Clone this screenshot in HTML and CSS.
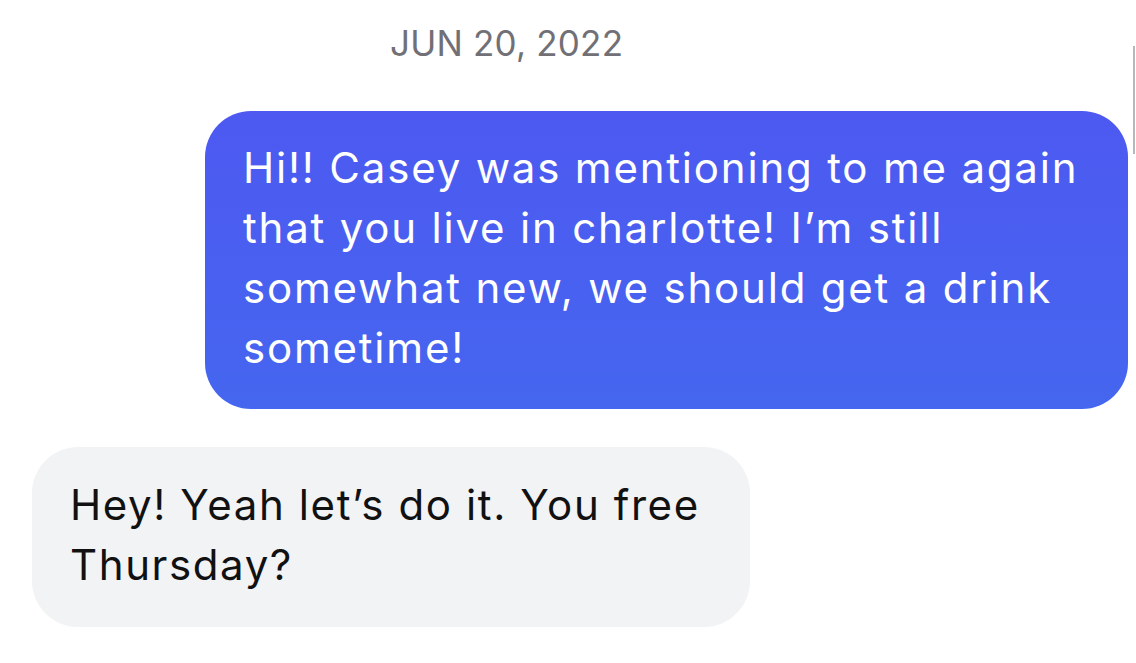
FILE: index.html
```html
<!DOCTYPE html>
<html>
<head>
<meta charset="utf-8">
<link rel="stylesheet" href="styles.css">
</head>
<body>
<div class="chat">
  <div class="date">JUN 20, 2022</div>
  <div class="msg msg-out">Hi!! Casey was mentioning to me again that you live in charlotte! I’m still somewhat new, we should get a drink sometime!</div>
  <div class="msg msg-in">Hey! Yeah let’s do it. You free Thursday?</div>
</div>
<div class="scrollbar"></div>
</body>
</html>
```

FILE: styles.css
```css
html, body {
  margin: 0;
  padding: 0;
  background: #ffffff;
}
body {
  width: 1136px;
  height: 663px;
  overflow: hidden;
  position: relative;
  font-family: Inter, "Liberation Sans", sans-serif;
}
.chat {
  display: flex;
  flex-direction: column;
  align-items: flex-start;
}
.date {
  margin-top: 22px;
  margin-left: 390px;
  white-space: nowrap;
  font-size: 35px;
  line-height: 42px;
  color: #707076;
  letter-spacing: 0.2px;
}
.msg {
  font-size: 42px;
  line-height: 60px;
  letter-spacing: 1.8px;
  border-radius: 46px;
  box-sizing: border-box;
}
.msg-out {
  margin-top: 47px;
  margin-left: 205px;
  width: 923px;
  padding: 27px 38px 31px 38px;
  background: linear-gradient(180deg, #4d59f1 0%, #4566ef 100%);
  color: #ffffff;
}
.msg-in {
  margin-top: 38px;
  margin-left: 32px;
  width: 718px;
  padding: 28px 38px 32px 38px;
  background: #f2f3f5;
  color: #111111;
  letter-spacing: 1.6px;
}
.scrollbar {
  position: absolute;
  left: 1133px;
  top: 46px;
  width: 2px;
  height: 108px;
  background: #b8b8bc;
}
```
